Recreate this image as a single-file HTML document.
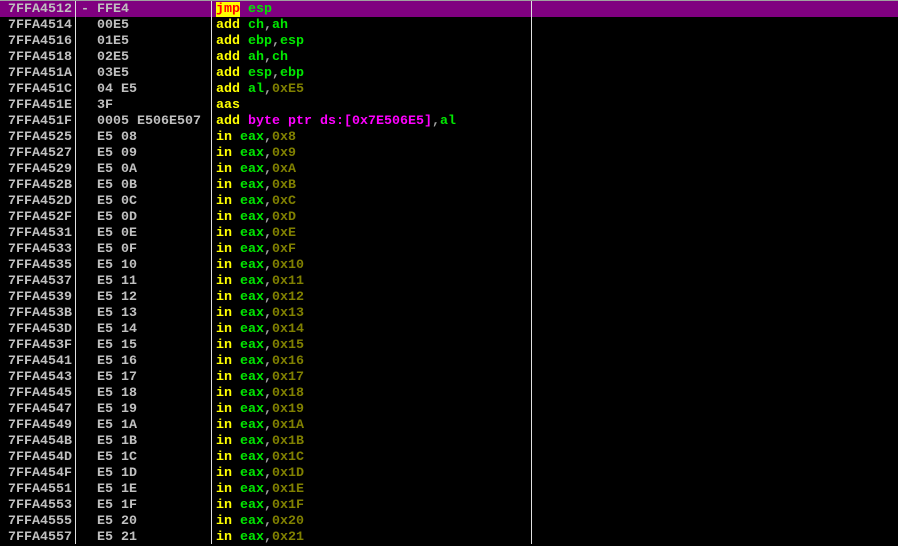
<!DOCTYPE html>
<html><head><meta charset="utf-8"><style>
body{margin:0;width:898px;height:544px;background:#000;overflow:hidden;position:relative;font-family:"Liberation Mono","DejaVu Sans Mono",monospace;font-weight:bold;font-size:13.33px;}
.top{position:absolute;left:0;top:0;width:898px;height:1px;background:#a0a0a0}
.sel{position:absolute;left:0;top:1px;width:898px;height:16px;background:#800080}
.sep{position:absolute;top:1px;width:1px;height:543px;background:#e0e0e0}
.r{position:absolute;left:0;top:0;height:16px;line-height:17px;white-space:pre;color:#c0c0c0}
.a{position:absolute;left:8px}
.b{position:absolute;left:81px}
.d{position:absolute;left:216px}
.m{color:#ffff00}.g{color:#00e800}.o{color:#808000}.p{color:#ff00ff}.c{color:#a0a0a0}
.j{background:#ffff00;color:#ff0000}
</style></head><body>
<div class="top"></div><div class="sel"></div>
<div class="sep" style="left:75px"></div><div class="sep" style="left:211px"></div><div class="sep" style="left:531px"></div>
<div class="r" style="top:1px"><span class="a">7FFA4512</span><span class="b">- FFE4</span><span class="d"><span class="j">jmp</span> <span class="g">esp</span></span></div>
<div class="r" style="top:17px"><span class="a">7FFA4514</span><span class="b">  00E5</span><span class="d"><span class="m">add</span> <span class="g">ch</span><span class="c">,</span><span class="g">ah</span></span></div>
<div class="r" style="top:33px"><span class="a">7FFA4516</span><span class="b">  01E5</span><span class="d"><span class="m">add</span> <span class="g">ebp</span><span class="c">,</span><span class="g">esp</span></span></div>
<div class="r" style="top:49px"><span class="a">7FFA4518</span><span class="b">  02E5</span><span class="d"><span class="m">add</span> <span class="g">ah</span><span class="c">,</span><span class="g">ch</span></span></div>
<div class="r" style="top:65px"><span class="a">7FFA451A</span><span class="b">  03E5</span><span class="d"><span class="m">add</span> <span class="g">esp</span><span class="c">,</span><span class="g">ebp</span></span></div>
<div class="r" style="top:81px"><span class="a">7FFA451C</span><span class="b">  04 E5</span><span class="d"><span class="m">add</span> <span class="g">al</span><span class="c">,</span><span class="o">0xE5</span></span></div>
<div class="r" style="top:97px"><span class="a">7FFA451E</span><span class="b">  3F</span><span class="d"><span class="m">aas</span></span></div>
<div class="r" style="top:113px"><span class="a">7FFA451F</span><span class="b">  0005 E506E507</span><span class="d"><span class="m">add</span> <span class="p">byte ptr ds:[0x7E506E5]</span><span class="c">,</span><span class="g">al</span></span></div>
<div class="r" style="top:129px"><span class="a">7FFA4525</span><span class="b">  E5 08</span><span class="d"><span class="m">in</span> <span class="g">eax</span><span class="c">,</span><span class="o">0x8</span></span></div>
<div class="r" style="top:145px"><span class="a">7FFA4527</span><span class="b">  E5 09</span><span class="d"><span class="m">in</span> <span class="g">eax</span><span class="c">,</span><span class="o">0x9</span></span></div>
<div class="r" style="top:161px"><span class="a">7FFA4529</span><span class="b">  E5 0A</span><span class="d"><span class="m">in</span> <span class="g">eax</span><span class="c">,</span><span class="o">0xA</span></span></div>
<div class="r" style="top:177px"><span class="a">7FFA452B</span><span class="b">  E5 0B</span><span class="d"><span class="m">in</span> <span class="g">eax</span><span class="c">,</span><span class="o">0xB</span></span></div>
<div class="r" style="top:193px"><span class="a">7FFA452D</span><span class="b">  E5 0C</span><span class="d"><span class="m">in</span> <span class="g">eax</span><span class="c">,</span><span class="o">0xC</span></span></div>
<div class="r" style="top:209px"><span class="a">7FFA452F</span><span class="b">  E5 0D</span><span class="d"><span class="m">in</span> <span class="g">eax</span><span class="c">,</span><span class="o">0xD</span></span></div>
<div class="r" style="top:225px"><span class="a">7FFA4531</span><span class="b">  E5 0E</span><span class="d"><span class="m">in</span> <span class="g">eax</span><span class="c">,</span><span class="o">0xE</span></span></div>
<div class="r" style="top:241px"><span class="a">7FFA4533</span><span class="b">  E5 0F</span><span class="d"><span class="m">in</span> <span class="g">eax</span><span class="c">,</span><span class="o">0xF</span></span></div>
<div class="r" style="top:257px"><span class="a">7FFA4535</span><span class="b">  E5 10</span><span class="d"><span class="m">in</span> <span class="g">eax</span><span class="c">,</span><span class="o">0x10</span></span></div>
<div class="r" style="top:273px"><span class="a">7FFA4537</span><span class="b">  E5 11</span><span class="d"><span class="m">in</span> <span class="g">eax</span><span class="c">,</span><span class="o">0x11</span></span></div>
<div class="r" style="top:289px"><span class="a">7FFA4539</span><span class="b">  E5 12</span><span class="d"><span class="m">in</span> <span class="g">eax</span><span class="c">,</span><span class="o">0x12</span></span></div>
<div class="r" style="top:305px"><span class="a">7FFA453B</span><span class="b">  E5 13</span><span class="d"><span class="m">in</span> <span class="g">eax</span><span class="c">,</span><span class="o">0x13</span></span></div>
<div class="r" style="top:321px"><span class="a">7FFA453D</span><span class="b">  E5 14</span><span class="d"><span class="m">in</span> <span class="g">eax</span><span class="c">,</span><span class="o">0x14</span></span></div>
<div class="r" style="top:337px"><span class="a">7FFA453F</span><span class="b">  E5 15</span><span class="d"><span class="m">in</span> <span class="g">eax</span><span class="c">,</span><span class="o">0x15</span></span></div>
<div class="r" style="top:353px"><span class="a">7FFA4541</span><span class="b">  E5 16</span><span class="d"><span class="m">in</span> <span class="g">eax</span><span class="c">,</span><span class="o">0x16</span></span></div>
<div class="r" style="top:369px"><span class="a">7FFA4543</span><span class="b">  E5 17</span><span class="d"><span class="m">in</span> <span class="g">eax</span><span class="c">,</span><span class="o">0x17</span></span></div>
<div class="r" style="top:385px"><span class="a">7FFA4545</span><span class="b">  E5 18</span><span class="d"><span class="m">in</span> <span class="g">eax</span><span class="c">,</span><span class="o">0x18</span></span></div>
<div class="r" style="top:401px"><span class="a">7FFA4547</span><span class="b">  E5 19</span><span class="d"><span class="m">in</span> <span class="g">eax</span><span class="c">,</span><span class="o">0x19</span></span></div>
<div class="r" style="top:417px"><span class="a">7FFA4549</span><span class="b">  E5 1A</span><span class="d"><span class="m">in</span> <span class="g">eax</span><span class="c">,</span><span class="o">0x1A</span></span></div>
<div class="r" style="top:433px"><span class="a">7FFA454B</span><span class="b">  E5 1B</span><span class="d"><span class="m">in</span> <span class="g">eax</span><span class="c">,</span><span class="o">0x1B</span></span></div>
<div class="r" style="top:449px"><span class="a">7FFA454D</span><span class="b">  E5 1C</span><span class="d"><span class="m">in</span> <span class="g">eax</span><span class="c">,</span><span class="o">0x1C</span></span></div>
<div class="r" style="top:465px"><span class="a">7FFA454F</span><span class="b">  E5 1D</span><span class="d"><span class="m">in</span> <span class="g">eax</span><span class="c">,</span><span class="o">0x1D</span></span></div>
<div class="r" style="top:481px"><span class="a">7FFA4551</span><span class="b">  E5 1E</span><span class="d"><span class="m">in</span> <span class="g">eax</span><span class="c">,</span><span class="o">0x1E</span></span></div>
<div class="r" style="top:497px"><span class="a">7FFA4553</span><span class="b">  E5 1F</span><span class="d"><span class="m">in</span> <span class="g">eax</span><span class="c">,</span><span class="o">0x1F</span></span></div>
<div class="r" style="top:513px"><span class="a">7FFA4555</span><span class="b">  E5 20</span><span class="d"><span class="m">in</span> <span class="g">eax</span><span class="c">,</span><span class="o">0x20</span></span></div>
<div class="r" style="top:529px"><span class="a">7FFA4557</span><span class="b">  E5 21</span><span class="d"><span class="m">in</span> <span class="g">eax</span><span class="c">,</span><span class="o">0x21</span></span></div>
</body></html>
